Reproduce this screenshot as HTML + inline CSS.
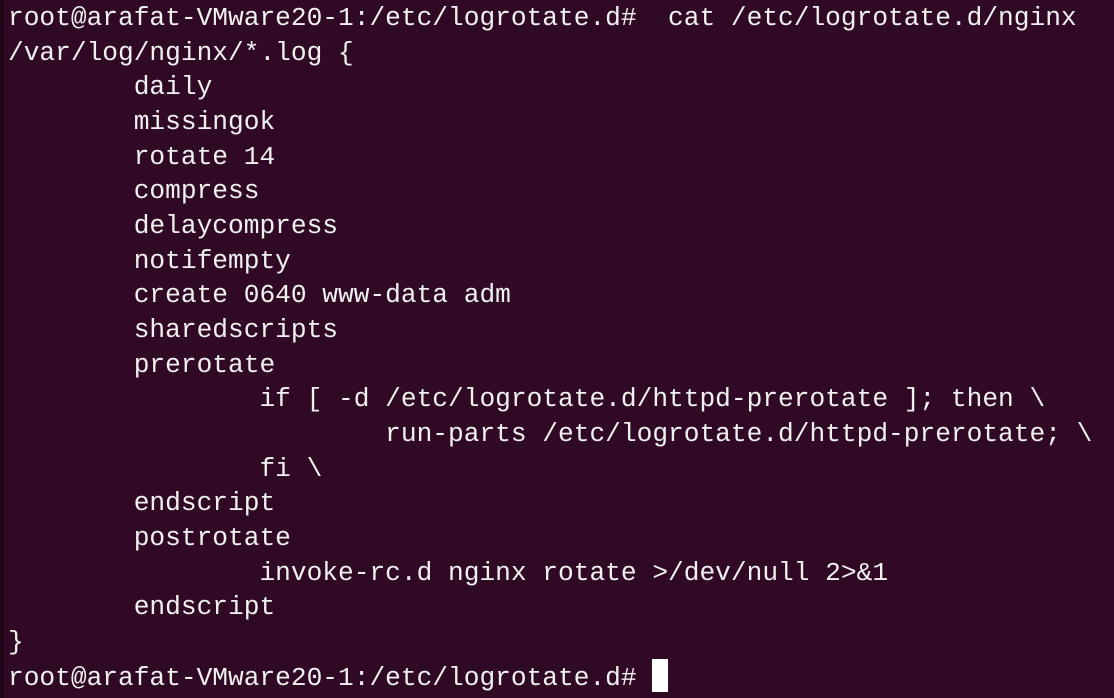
<!DOCTYPE html>
<html><head><meta charset="utf-8"><style>
html,body{margin:0;padding:0;}
body{width:1114px;height:698px;background:#300a24;overflow:hidden;position:relative;}
.strip{position:absolute;left:0;top:0;width:4px;height:698px;background:#22071a;}
pre{margin:0;position:absolute;left:8px;top:1px;font-family:"Liberation Mono","DejaVu Sans Mono",monospace;font-size:26.2px;line-height:34.65px;color:#f0f0f0;white-space:pre;}
.cur{display:inline-block;width:16px;height:33px;background:#fff;vertical-align:-7px;}
</style></head><body><div class="strip"></div><pre>root@arafat-VMware20-1:/etc/logrotate.d#  cat /etc/logrotate.d/nginx
/var/log/nginx/*.log {
        daily
        missingok
        rotate 14
        compress
        delaycompress
        notifempty
        create 0640 www-data adm
        sharedscripts
        prerotate
                if [ -d /etc/logrotate.d/httpd-prerotate ]; then \
                        run-parts /etc/logrotate.d/httpd-prerotate; \
                fi \
        endscript
        postrotate
                invoke-rc.d nginx rotate &gt;/dev/null 2&gt;&amp;1
        endscript
}
root@arafat-VMware20-1:/etc/logrotate.d# <span class="cur"></span></pre></body></html>
